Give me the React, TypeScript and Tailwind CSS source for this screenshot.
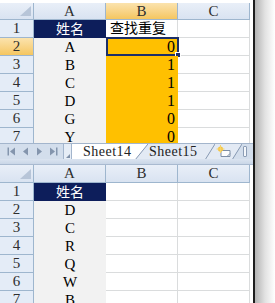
const font = "font-['Liberation_Serif','Noto_Sans_CJK_SC',serif]";

type Row = { a: string; b?: string };

const TOP: Row[] = [
  { a: "姓名", b: "查找重复" },
  { a: "A", b: "0" },
  { a: "B", b: "1" },
  { a: "C", b: "1" },
  { a: "D", b: "1" },
  { a: "G", b: "0" },
  { a: "Y", b: "0" },
];

const BOTTOM: Row[] = [
  { a: "姓名" },
  { a: "D" },
  { a: "C" },
  { a: "R" },
  { a: "Q" },
  { a: "W" },
  { a: "B" },
];

const head = "flex items-center justify-center border-r border-b border-[#9eb6ce] text-[15px] text-[#2e2e2e]";
const headBg = "bg-gradient-to-b from-[#e9eff8] to-[#d9e3f1]";
const headSel = "bg-gradient-to-b from-[#fbe3ad] to-[#f5c65f]";
const grid = "border-r border-b border-[#dadcdd] bg-white";

function Sheet({ rows, active }: { rows: Row[]; active: boolean }) {
  return (
    <div
      className={
        active
          ? "grid grid-cols-[34px_72px_72px_72px_3px] grid-rows-[17px] auto-rows-[18px]"
          : "grid grid-cols-[34px_72px_72px_72px_3px] auto-rows-[18px]"
      }
    >
      {/* header row */}
      <div className={`${head} ${headBg} items-end justify-end pb-[3px] pr-[2px]`}>
        <svg width="11" height="10" viewBox="0 0 11 10">
          <polygon points="11,0 11,10 0,10" fill="#b7c5d8" />
        </svg>
      </div>
      <div className={`${head} ${headBg}`}>A</div>
      <div className={`${head} ${active ? headSel : headBg}`}>B</div>
      <div className={`${head} ${headBg}`}>C</div>
      <div className="bg-white" />

      {rows.map((r, i) => {
        const n = i + 1;
        const first = n === 1;
        return [
          <div key={`n${n}`} className={`${head} ${active && n === 2 ? headSel : "bg-[#e4ecf7]"}`}>
            {n}
          </div>,
          first ? (
            <div key={`a${n}`} className="flex items-center justify-center bg-[#0d1e5b] text-[14px] text-white">
              {r.a}
            </div>
          ) : (
            <div key={`a${n}`} className="flex items-center justify-center bg-[#f2f2f2] text-[15px] text-black">
              {r.a}
            </div>
          ),
          !active ? (
            <div key={`b${n}`} className={grid} />
          ) : first ? (
            <div key={`b${n}`} className={`${grid} flex items-center pl-[4px] text-[14px] text-black`}>
              {r.b}
            </div>
          ) : (
            <div key={`b${n}`} className="relative flex items-center justify-end bg-[#ffc000] pr-[3px] text-[16px] text-black">
              {n === 2 && (
                <>
                  <div className="absolute -top-[1px] left-0 -right-[1px] bottom-0 border-2 border-[#1c2f68]" />
                  <div className="absolute -bottom-[2px] -right-[3px] h-[6px] w-[6px] border border-white bg-[#1c2f68]" />
                </>
              )}
              <span className="relative">{r.b}</span>
            </div>
          ),
          <div key={`c${n}`} className={grid} />,
          <div key={`e${n}`} className="bg-white" />,
        ];
      })}
    </div>
  );
}

function Slash({ left, right, w = 13 }: { left: string; right: string; w?: number }) {
  return (
    <svg width={w} height="16" viewBox={`0 0 ${w} 16`} className="shrink-0">
      <polygon points={`0,0 ${w},0 0,16`} fill={left} />
      <polygon points={`${w},0 ${w},16 0,16`} fill={right} />
      <line x1="0" y1="16" x2={w} y2="0" stroke="#8799b3" strokeWidth="1" />
    </svg>
  );
}

function NavIcon({ kind }: { kind: "first" | "prev" | "next" | "last" }) {
  const c = "#8495ad";
  return (
    <div className="flex w-[14px] items-center justify-center">
      <svg width="9" height="9" viewBox="0 0 9 9">
        {kind === "first" && (
          <>
            <rect x="0.5" y="0.5" width="1.5" height="8" fill={c} />
            <polygon points="8,0.5 8,8.5 3,4.5" fill={c} />
          </>
        )}
        {kind === "prev" && <polygon points="7,0.5 7,8.5 2,4.5" fill={c} />}
        {kind === "next" && <polygon points="2,0.5 2,8.5 7,4.5" fill={c} />}
        {kind === "last" && (
          <>
            <polygon points="1,0.5 1,8.5 6,4.5" fill={c} />
            <rect x="7" y="0.5" width="1.5" height="8" fill={c} />
          </>
        )}
      </svg>
    </div>
  );
}

function TabBar() {
  const inactive = "#e3eaf4";
  return (
    <div className="flex h-[16px] border-t border-[#a3b5cc] bg-[#d3deec] text-[14px] leading-none tracking-[0.5px] text-[#222]">
      <div className="flex w-[63px] items-center pl-[4px]">
        <NavIcon kind="first" />
        <NavIcon kind="prev" />
        <NavIcon kind="next" />
        <NavIcon kind="last" />
      </div>
      <div className="flex w-[9px] items-end justify-end border-x border-[#a3b5cc] bg-[#e6edf6] pb-[1px] pr-[1px]">
        <svg width="4" height="4" viewBox="0 0 4 4">
          <polygon points="4,0 4,4 0,4" fill="#7f90a8" />
        </svg>
      </div>
      <div className="flex w-[63px] items-center bg-white pl-[11px]">Sheet14</div>
      <Slash left="#ffffff" right={inactive} />
      <div className="flex w-[57px] items-center pl-[1px]" style={{ background: inactive }}>
        Sheet15
      </div>
      <Slash left={inactive} right={inactive} w={10} />
      <div className="flex w-[17px] items-center justify-center" style={{ background: inactive }}>
        <svg width="16" height="13" viewBox="0 0 16 13">
          <path d="M5 5.5 H14 V11.5 H5 Z" fill="#fdfdfd" stroke="#7d8ea6" strokeWidth="1" />
          <path d="M11 11.5 L14 8.5" stroke="#7d8ea6" strokeWidth="1" />
          <circle cx="4.5" cy="4" r="2.6" fill="#f5c542" />
          <path d="M4.5 0 V8 M0.5 4 H8.5" stroke="#f7d46a" strokeWidth="1" />
        </svg>
      </div>
      <Slash left={inactive} right="#d3deec" w={10} />
      <div className="flex w-[11px] items-center pl-[1px]">
        <div className="h-[11px] w-[4px] rounded-[1px] border border-[#8c9db5] bg-[#f4f7fb]" />
      </div>
    </div>
  );
}

export default function App() {
  return (
    <div className={`flex h-[303px] w-[275px] overflow-hidden bg-white ${font}`}>
      <div className="flex w-[253px] flex-col">
        <div className="h-[3px] bg-white" />
        <div className="h-[140px] overflow-hidden">
          <Sheet rows={TOP} active />
        </div>
        <TabBar />
        <div className="h-[6px] border-b border-[#a9bad0] bg-gradient-to-b from-[#dbe4f0] to-[#c9d6e7]" />
        <div className="flex-1 overflow-hidden">
          <Sheet rows={BOTTOM} active={false} />
        </div>
      </div>
      <div className="w-[2px] bg-[#1c1c1c]" />
      <div className="flex-1 bg-gradient-to-r from-[#b3b3b3] via-[#e2e2e2] to-white" />
    </div>
  );
}
